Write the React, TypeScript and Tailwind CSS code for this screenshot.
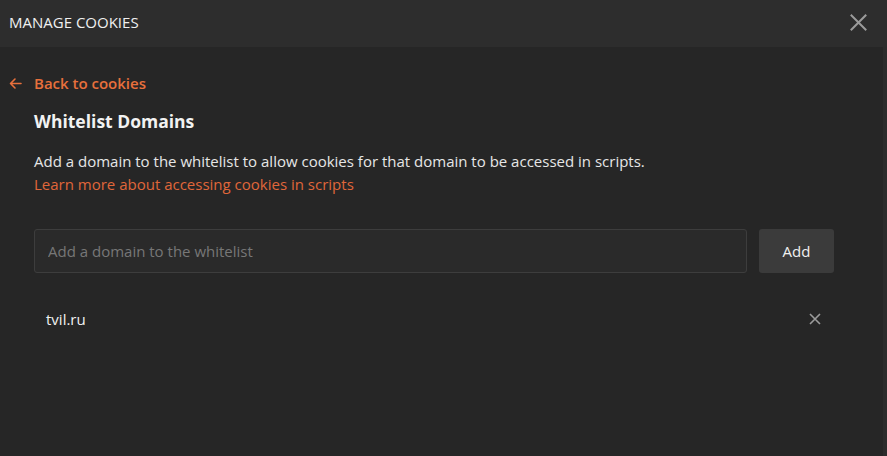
import React, { useState } from 'react';

export default function App() {
  const [domain, setDomain] = useState('');
  const [domains, setDomains] = useState<string[]>(['tvil.ru']);

  const addDomain = () => {
    if (!domain.trim()) return;
    setDomains([...domains, domain.trim()]);
    setDomain('');
  };

  return (
    <div className="w-[887px] h-[456px] bg-[#262626] font-['Open_Sans',sans-serif] text-[#e8e8e8] flex flex-col overflow-hidden relative">
      {/* Header */}
      <div className="h-[47px] bg-[#2d2d2d] flex items-center justify-between pl-[9px] pr-[20px] pb-[3px] shrink-0">
        <span className="text-[15px] text-[#f0f0f0]">MANAGE COOKIES</span>
        <button className="text-[#9b9b9b]" aria-label="Close">
          <svg width="17" height="17" viewBox="0 0 17 17" fill="none" stroke="currentColor" strokeWidth="2" strokeLinecap="square">
            <path d="M1.5 1.5 L15.5 15.5 M15.5 1.5 L1.5 15.5" />
          </svg>
        </button>
      </div>
      <div className="absolute right-0 top-[47px] bottom-0 w-[4px] bg-[#2c2c2c]" />

      {/* Body */}
      <div className="flex flex-col pl-[34px] pr-[53px] pt-[24px]">
        <button className="flex items-center -ml-[25px] text-[#e8703c] text-[15px] font-semibold h-[24px]">
          <svg width="13" height="13" viewBox="0 0 13 13" fill="none" stroke="currentColor" strokeWidth="1.6" strokeLinecap="round" strokeLinejoin="round" className="mr-[12px]">
            <path d="M12 6.5 H1.5 M6 2 L1.5 6.5 L6 11" />
          </svg>
          Back to cookies
        </button>

        <h2 className="text-[17.5px] font-bold text-[#f2f2f2] mt-[14px] leading-[24px]">Whitelist Domains</h2>

        <p className="text-[15px] text-[#e6e6e6] mt-[17px] leading-[23px]">
          Add a domain to the whitelist to allow cookies for that domain to be accessed in scripts.
        </p>
        <a className="text-[15px] text-[#e0663a] leading-[23px] w-fit cursor-pointer">
          Learn more about accessing cookies in scripts
        </a>

        <div className="flex gap-[12px] mt-[33px]">
          <input
            value={domain}
            onChange={(e) => setDomain(e.target.value)}
            placeholder="Add a domain to the whitelist"
            className="flex-1 h-[44px] bg-[#2a2a2a] border border-[#3d3d3d] rounded-[3px] px-[13px] text-[15px] text-[#e8e8e8] placeholder:text-[#777777] outline-none"
          />
          <button
            onClick={addDomain}
            className="w-[75px] h-[44px] bg-[#3b3b3b] rounded-[3px] text-[15px] text-[#f0f0f0]"
          >
            Add
          </button>
        </div>

        <div className="flex flex-col mt-[24px]">
          {domains.map((d) => (
            <div key={d} className="flex items-center justify-between h-[44px] pl-[12px] pr-[13px]">
              <span className="text-[15px] text-[#f0f0f0]">{d}</span>
              <button
                onClick={() => setDomains(domains.filter((x) => x !== d))}
                className="text-[#9b9b9b]"
                aria-label="Remove"
              >
                <svg width="12" height="12" viewBox="0 0 12 12" fill="none" stroke="currentColor" strokeWidth="1.6">
                  <path d="M1 1 L11 11 M11 1 L1 11" />
                </svg>
              </button>
            </div>
          ))}
        </div>
      </div>
    </div>
  );
}
